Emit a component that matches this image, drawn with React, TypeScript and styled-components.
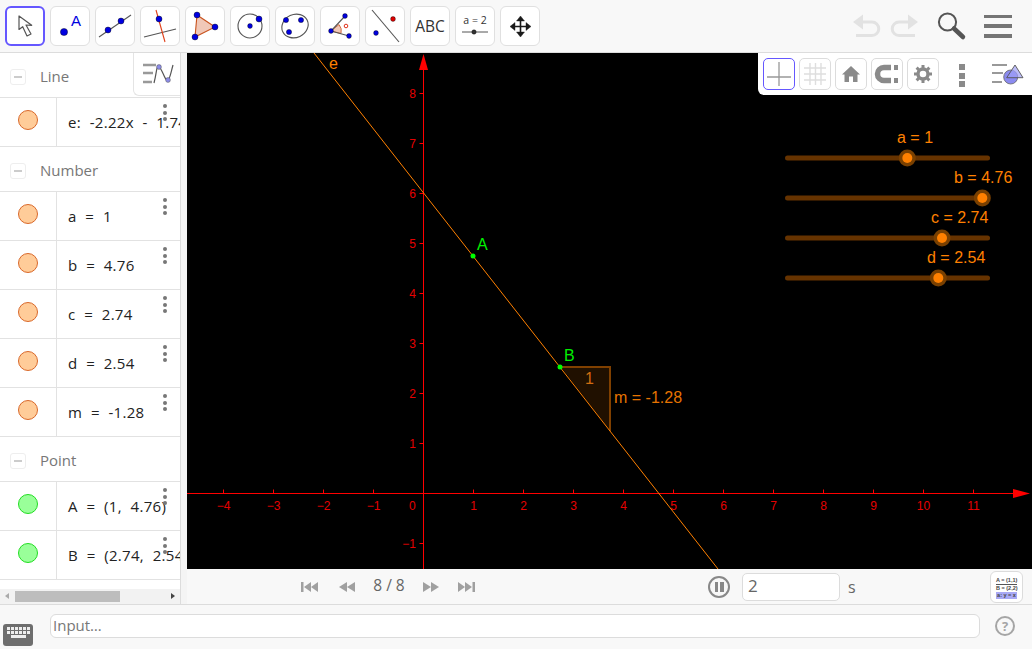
import React from 'react'
import styled, { createGlobalStyle } from 'styled-components'

const GlobalStyle = createGlobalStyle`
  html, body {
    margin: 0;
    padding: 0;
    background: #fff;
    font-family: "Open Sans", "Liberation Sans", sans-serif;
    overflow: hidden;
  }
  * { box-sizing: border-box; }
`

const Page = styled.div`
  width: 1032px;
  height: 649px;
  display: flex;
  flex-direction: column;
  background: #f8f8f8;
`

/* top toolbar */
const Toolbar = styled.div`
  height: 53px;
  flex: none;
  display: flex;
  align-items: flex-start;
  padding: 6px 20px 0 5px;
  gap: 5px;
  background: #f8f8f8;
  border-bottom: 1px solid #dcdcdc;
`

const ToolButton = styled.div<{ $active?: boolean }>`
  width: 40px;
  height: 40px;
  flex: none;
  background: #fff;
  border-radius: 6px;
  border: ${({ $active }) => ($active ? '2px solid #6557ff' : '1px solid #e0e0e0')};
  display: flex;
  align-items: center;
  justify-content: center;
  svg { display: block; flex: none; }
`

const ToolbarRight = styled.div`
  margin-left: auto;
  display: flex;
  align-items: center;
  height: 40px;
  gap: 9px;
`

const dot = (x: number, y: number, r = 3, fill = '#0000e0') => (
  <circle cx={x} cy={y} r={r} fill={fill} stroke="#000" strokeWidth={0.4} />
)

const Tool: React.FC<{ active?: boolean; children: React.ReactNode }> = ({ active, children }) => (
  <ToolButton $active={active}>
    <svg width="40" height="40" viewBox="0 0 40 40">
      {children}
    </svg>
  </ToolButton>
)

const toolIcons: React.ReactNode[] = [
  <path key="a" d="M14 10 L14 23.5 L17.7 20.7 L22 30 L26 28 L21 19 L26.7 19.3 Z" fill="#fff" stroke="#555" strokeWidth="1.2" strokeLinejoin="round" />,
  <g key="b">
    {dot(14, 26, 3.6)}
    <text x="26" y="20" fontSize="15" fill="#0000e0" textAnchor="middle" fontFamily="'Liberation Sans', sans-serif">A</text>
  </g>,
  <g key="c">
    <line x1="4" y1="31" x2="36" y2="9" stroke="#555" strokeWidth="1.1" />
    {dot(13, 24)}
    {dot(26, 15)}
  </g>,
  <g key="d">
    <line x1="4" y1="31" x2="36" y2="23" stroke="#555" strokeWidth="1.1" />
    <line x1="16" y1="4" x2="25" y2="36" stroke="#e0401a" strokeWidth="1.1" />
    {dot(19, 13)}
  </g>,
  <g key="e">
    <polygon points="12,9 30,21 10,31" fill="#f0c8b8" stroke="#c8521d" strokeWidth="1.1" />
    {dot(12, 9)}
    {dot(30, 21)}
    {dot(10, 31)}
  </g>,
  <g key="f">
    <circle cx="20" cy="20" r="12" fill="none" stroke="#555" strokeWidth="1.1" />
    {dot(20, 20, 2.4)}
    {dot(29, 13)}
  </g>,
  <g key="g">
    <ellipse cx="20" cy="20" rx="13.5" ry="11.5" fill="none" stroke="#555" strokeWidth="1.1" transform="rotate(-25 20 20)" />
    {dot(11, 14, 2.6)}
    {dot(26, 14, 2.6)}
    {dot(14, 26, 2.6)}
  </g>,
  <g key="h">
    <path d="M11 25 L19 18.5 A10 10 0 0 1 21 27.5 Z" fill="#f0c8b8" stroke="#c8521d" strokeWidth="0.8" />
    <path d="M25 10 L11 25 L29 30" fill="none" stroke="#555" strokeWidth="1.1" />
    <circle cx="26" cy="20" r="1.8" fill="none" stroke="#e0301a" strokeWidth="1" />
    {dot(25, 10, 2.4)}
    {dot(11, 25, 2.4)}
    {dot(29, 30, 2.4)}
  </g>,
  <g key="i">
    <line x1="7" y1="4" x2="34" y2="36" stroke="#555" strokeWidth="1.1" />
    {dot(28, 13, 2.4, '#e00000')}
    {dot(11, 27, 2.4)}
  </g>,
  <text key="j" x="20" y="26" fontSize="15.5" fill="#333" textAnchor="middle" fontFamily="'Open Sans', sans-serif">ABC</text>,
  <g key="k">
    <text x="20" y="18" fontSize="10.5" fill="#333" textAnchor="middle" fontFamily="'Open Sans', sans-serif">a = 2</text>
    <line x1="7" y1="26" x2="33" y2="26" stroke="#555" strokeWidth="1" />
    {dot(19, 26, 2.2, '#333')}
  </g>,
  <g key="l" fill="#1a1a1a" stroke="#1a1a1a">
    <path d="M20.5 13 V28 M13 20.5 H28" strokeWidth="1.6" fill="none" />
    <polygon points="20.5,10 16.5,15 24.5,15" strokeWidth="0.4" />
    <polygon points="20.5,31 16.5,26 24.5,26" strokeWidth="0.4" />
    <polygon points="10,20.5 15,16.5 15,24.5" strokeWidth="0.4" />
    <polygon points="31,20.5 26,16.5 26,24.5" strokeWidth="0.4" />
  </g>,
]

const UndoIcon: React.FC<{ flip?: boolean }> = ({ flip }) => (
  <svg width="28" height="24" viewBox="0 0 28 24" style={flip ? { transform: 'scaleX(-1)' } : undefined}>
    <path d="M5 8 H19 A6.5 6.5 0 0 1 19 21.5 H3" fill="none" stroke="#e2e2e2" strokeWidth="3" />
    <polygon points="0,8 10,0.5 10,15.5" fill="#e2e2e2" />
  </svg>
)

const SearchIcon = () => (
  <svg width="30" height="30" viewBox="0 0 30 30" style={{ margin: '0 8px 0 10px' }}>
    <circle cx="10.5" cy="11" r="8.6" fill="none" stroke="#555" strokeWidth="2" />
    <line x1="17" y1="17.5" x2="26" y2="26" stroke="#555" strokeWidth="4.5" strokeLinecap="round" />
  </svg>
)

const MenuIcon = styled.div`
  width: 28px;
  height: 23px;
  display: flex;
  flex-direction: column;
  justify-content: space-between;
  span {
    display: block;
    height: 3.5px;
    background: #757575;
  }
`

/* workspace */
const Workspace = styled.div`
  flex: 1;
  min-height: 0;
  display: flex;
`

const AlgebraPanel = styled.div`
  position: relative;
  width: 181px;
  flex: none;
  display: flex;
  flex-direction: column;
  background: #fff;
  border-right: 1px solid #dcdcdc;
  border-bottom: 1px solid #dcdcdc;
`

const AlgebraList = styled.div`
  flex: 1;
  min-height: 0;
  overflow: hidden;
`

const GroupHeader = styled.div`
  height: 45px;
  display: flex;
  align-items: center;
  padding: 1px 0 0 10px;
  gap: 14px;
  color: #777;
  font-size: 15px;
  border-bottom: 1px solid #e2e2e2;
`

const Collapse = styled.span`
  width: 16px;
  height: 16px;
  margin-top: 2px;
  border: 1px solid #eee;
  border-radius: 3px;
  display: flex;
  align-items: center;
  justify-content: center;
  &::before {
    content: '';
    width: 8px;
    height: 2px;
    background: #ccc;
  }
`

const Row = styled.div`
  position: relative;
  height: 49px;
  display: flex;
  border-bottom: 1px solid #e2e2e2;
`

const MarbleCell = styled.div`
  width: 57px;
  flex: none;
  padding: 12px 0 0 18px;
  border-right: 1px solid #e2e2e2;
`

const Marble = styled.div<{ $color: string; $edge: string }>`
  width: 20px;
  height: 20px;
  border-radius: 50%;
  background: ${({ $color }) => $color};
  border: 1px solid ${({ $edge }) => $edge};
`

const Formula = styled.div`
  padding: 14px 0 0 11px;
  font-size: 15px;
  line-height: 20px;
  letter-spacing: 0.3px;
  word-spacing: 4.5px;
  color: #222;
  white-space: nowrap;
  overflow: hidden;
`

const MoreDots = styled.div`
  position: absolute;
  left: 163px;
  top: 6px;
  display: flex;
  flex-direction: column;
  gap: 2.5px;
  span {
    width: 4px;
    height: 4px;
    border-radius: 50%;
    background: #777;
  }
`

const ViewToggle = styled.div`
  position: absolute;
  top: 0;
  right: 0;
  width: 47px;
  height: 43px;
  background: #fff;
  border-left: 1px solid #e4e4e4;
  border-bottom: 1px solid #e4e4e4;
  border-bottom-left-radius: 6px;
`

const ScrollBar = styled.div`
  height: 15px;
  flex: none;
  display: flex;
  align-items: center;
  background: #f2f2f2;
  position: relative;
`

const ScrollThumb = styled.div`
  width: 105px;
  height: 11px;
  margin-left: 15px;
  background: #bdbdbd;
`

const ScrollArrow = styled.span<{ $right?: boolean }>`
  position: absolute;
  top: 4px;
  ${({ $right }) => ($right ? 'right: 5px;' : 'left: 5px;')}
  width: 0;
  height: 0;
  border-top: 3.5px solid transparent;
  border-bottom: 3.5px solid transparent;
  ${({ $right }) => ($right ? 'border-left: 4px solid #444;' : 'border-right: 4px solid #aaa;')}
`

const Gutter = styled.div`
  width: 6px;
  flex: none;
  background: #f4f4f4;
  border-bottom: 1px solid #dcdcdc;
`

const RightColumn = styled.div`
  flex: 1;
  min-width: 0;
  display: flex;
  flex-direction: column;
`

const Graphics = styled.div`
  position: relative;
  flex: 1;
  min-height: 0;
  background: #000;
  svg { display: block; }
`

const StyleBar = styled.div`
  position: absolute;
  top: 0;
  right: 0;
  width: 274px;
  height: 42px;
  padding: 5px 0 0 5px;
  display: flex;
  align-items: flex-start;
  gap: 4px;
  background: #fff;
  border-bottom-left-radius: 6px;
`

const StyleButton = styled.div<{ $active?: boolean }>`
  width: 32px;
  height: 32px;
  flex: none;
  background: #fff;
  border: 1px solid ${({ $active }) => ($active ? '#6557ff' : '#dcdcdc')};
  border-radius: 5px;
  display: flex;
  align-items: center;
  justify-content: center;
`

const StyleDots = styled.div`
  width: 6px;
  margin: 6px 23px 0 16px;
  display: flex;
  flex-direction: column;
  gap: 2.5px;
  flex: none;
  span {
    display: block;
    width: 6px;
    height: 6px;
    background: #8a8a8a;
  }
`

/* animation bar */
const PlayBar = styled.div`
  height: 36px;
  flex: none;
  display: flex;
  align-items: center;
  padding-left: 114px;
  background: #f8f8f8;
  border-bottom: 1px solid #dcdcdc;
`

const NavGroup = styled.div`
  display: flex;
  align-items: center;
  svg { display: block; }
`

const PageLabel = styled.span`
  width: 64px;
  text-align: center;
  margin: 0 2px 3px 2px;
  font-size: 15.5px;
  color: #666;
`

const PauseButton = styled.div`
  width: 22px;
  height: 22px;
  margin-left: 233px;
  border: 2px solid #888;
  border-radius: 50%;
  display: flex;
  align-items: center;
  justify-content: center;
  gap: 2px;
  flex: none;
  span {
    width: 3.5px;
    height: 10px;
    background: #888;
  }
`

const TimeField = styled.div`
  width: 98px;
  height: 28px;
  margin-left: 12px;
  padding-left: 5px;
  background: #fff;
  border: 1px solid #dcdcdc;
  border-radius: 5px;
  font-size: 17px;
  line-height: 24px;
  color: #666;
  flex: none;
`

const Unit = styled.span`
  margin-left: 8px;
  font-size: 16px;
  color: #666;
`

const TableButton = styled.div`
  margin-left: auto;
  margin-right: 9px;
  width: 33px;
  height: 32px;
  padding-top: 5px;
  background: #fff;
  border: 1px solid #dcdcdc;
  border-radius: 6px;
  display: flex;
  flex-direction: column;
  align-items: center;
  font-family: "Liberation Sans", sans-serif;
  font-size: 5.5px;
  font-weight: bold;
  line-height: 7px;
  color: #444;
  span { width: 21px; text-align: center; white-space: nowrap; }
  span + span { border-top: 1px solid #555; }
  span:last-child { background: #a9a9f5; border-top: none; }
`

/* input bar */
const InputBar = styled.div`
  height: 44px;
  flex: none;
  display: flex;
  align-items: flex-start;
  padding: 9px 0 0 3px;
  background: #f8f8f8;
`

const Keyboard = styled.div`
  width: 30px;
  height: 22px;
  margin-top: 10px;
  padding: 3px 3px 2px;
  flex: none;
  border-radius: 3px;
  background: #6e6e6e;
  display: grid;
  grid-template-columns: repeat(6, 3px);
  grid-auto-rows: 3px;
  justify-content: center;
  gap: 1px;
  i { background: #eee; display: block; }
  i:last-child { grid-column: 2 / 6; }
`

const InputField = styled.div`
  width: 930px;
  height: 24px;
  margin-left: 17px;
  padding-left: 2px;
  flex: none;
  background: #fff;
  border: 1px solid #dcdcdc;
  border-radius: 6px;
  font-size: 15px;
  line-height: 21px;
  color: #777;
`

const HelpIcon = styled.div`
  width: 20px;
  height: 20px;
  margin: 2px 0 0 15px;
  flex: none;
  border: 2px solid #a5a5a5;
  border-radius: 50%;
  font-size: 13px;
  font-weight: bold;
  line-height: 16px;
  text-align: center;
  color: #a5a5a5;
`

const orange = { color: '#ffcc99', edge: '#d9682a' }
const green = { color: '#99ff99', edge: '#22dd22' }

const groups = [
  { name: 'Line', rows: [{ text: 'e: -2.22x - 1.74', ...orange }] },
  {
    name: 'Number',
    rows: [
      { text: 'a = 1', ...orange },
      { text: 'b = 4.76', ...orange },
      { text: 'c = 2.74', ...orange },
      { text: 'd = 2.54', ...orange },
      { text: 'm = -1.28', ...orange },
    ],
  },
  {
    name: 'Point',
    rows: [
      { text: 'A = (1, 4.76)', ...green },
      { text: 'B = (2.74, 2.54)', ...green },
    ],
  },
]

const sliders = [
  { label: 'a = 1', knob: 907.3, textX: 897, y: 158 },
  { label: 'b = 4.76', knob: 982.3, textX: 954, y: 198 },
  { label: 'c = 2.74', knob: 942, textX: 931, y: 238 },
  { label: 'd = 2.54', knob: 938.3, textX: 927, y: 278 },
]

const unitX = 50
const originX = 423.5
const originY = 493.5
const axisRed = '#ff0000'
const tickRed = '#e60000'
const lineOrange = '#ff8000'
const sansFont = "'Liberation Sans', sans-serif"

const GraphCanvas = () => {
  const xs = [-4, -3, -2, -1, 1, 2, 3, 4, 5, 6, 7, 8, 9, 10, 11]
  const ys = [-1, 1, 2, 3, 4, 5, 6, 7, 8]
  return (
    <svg width="845" height="516" viewBox="187 53 845 516" fontFamily={sansFont}>
      {/* axes */}
      <line x1={originX} y1="60" x2={originX} y2="569" stroke={axisRed} strokeWidth="1" />
      <line x1="187" y1={originY} x2="1020" y2={originY} stroke={axisRed} strokeWidth="1" />
      <polygon points="423.5,54 419,70 428,70" fill={axisRed} />
      <polygon points="1030,493.5 1013,489 1013,498" fill={axisRed} />
      {xs.map((v) => (
        <g key={v}>
          <line x1={originX + v * unitX} y1={originY - 4} x2={originX + v * unitX} y2={originY} stroke={axisRed} />
          <text x={originX + v * unitX} y="510" fontSize="12" fill={tickRed} textAnchor="middle">
            {v < 0 ? `\u2212${-v}` : v}
          </text>
        </g>
      ))}
      {ys.map((v) => (
        <g key={v}>
          <line x1={originX - 4} y1={originY - v * unitX} x2={originX} y2={originY - v * unitX} stroke={axisRed} />
          <text x="416" y={originY - v * unitX + 4} fontSize="12" fill={tickRed} textAnchor="end">
            {v < 0 ? `\u2212${-v}` : v}
          </text>
        </g>
      ))}
      <text x="409" y="510" fontSize="12" fill={tickRed}>0</text>

      {/* slope triangle */}
      <polygon points="561,367 610,367 610,431" fill="#201000" />
      <polyline points="561,367 610,367 610,431" fill="none" stroke="#804000" strokeWidth="2" />
      <text x="585" y="384" fontSize="16" fill="#d06c10">1</text>
      <text x="614" y="403" fontSize="16" fill={lineOrange} opacity="0.9">m = -1.28</text>

      {/* line e */}
      <line x1="314" y1="53" x2="718" y2="569" stroke={lineOrange} strokeWidth="1" />
      <text x="329" y="69" fontSize="16" fill={lineOrange}>e</text>

      {/* points */}
      <circle cx="473" cy="256" r="2.5" fill="#00ff00" />
      <text x="477" y="250" fontSize="16" fill="#00f000">A</text>
      <circle cx="560" cy="367" r="2.5" fill="#00ff00" />
      <text x="564" y="361" fontSize="16" fill="#00f000">B</text>

      {/* sliders */}
      {sliders.map((s) => (
        <g key={s.label}>
          <line x1="787.5" y1={s.y} x2="987.5" y2={s.y} stroke="#663300" strokeWidth="5" strokeLinecap="round" />
          <circle cx={s.knob} cy={s.y} r="8.5" fill="#7a4000" />
          <circle cx={s.knob} cy={s.y} r="5" fill={lineOrange} />
          <text x={s.textX} y={s.y - 15} fontSize="16" fill={lineOrange}>{s.label}</text>
        </g>
      ))}
    </svg>
  )
}

const NavIcon: React.FC<{ dir: 1 | -1; end?: boolean; gap: number }> = ({ dir, end, gap }) => (
  <svg
    width="17"
    height="12"
    viewBox="0 0 17 12"
    style={{ marginRight: gap, transform: dir < 0 ? 'scaleX(-1)' : undefined }}
  >
    <polygon points={end ? '0,1 7,6 0,11' : '0,1 8,6 0,11'} fill="#a0a0a0" />
    <polygon points={end ? '7,1 14,6 7,11' : '8,1 16,6 8,11'} fill="#a0a0a0" />
    {end && <rect x="14.5" y="1" width="2.5" height="10" fill="#a0a0a0" />}
  </svg>
)

export default function App() {
  return (
    <Page>
      <GlobalStyle />
      <Toolbar>
        {toolIcons.map((icon, i) => (
          <Tool key={i} active={i === 0}>
            {icon}
          </Tool>
        ))}
        <ToolbarRight>
          <UndoIcon />
          <UndoIcon flip />
          <SearchIcon />
          <MenuIcon>
            <span />
            <span />
            <span />
          </MenuIcon>
        </ToolbarRight>
      </Toolbar>

      <Workspace>
        <AlgebraPanel>
          <AlgebraList>
            {groups.map((g) => (
              <React.Fragment key={g.name}>
                <GroupHeader>
                  <Collapse />
                  {g.name}
                </GroupHeader>
                {g.rows.map((r) => (
                  <Row key={r.text}>
                    <MarbleCell>
                      <Marble $color={r.color} $edge={r.edge} />
                    </MarbleCell>
                    <Formula>{r.text}</Formula>
                    <MoreDots>
                      <span />
                      <span />
                      <span />
                    </MoreDots>
                  </Row>
                ))}
              </React.Fragment>
            ))}
          </AlgebraList>
          <ViewToggle>
            <svg width="46" height="42" viewBox="133 53 46 42">
              <path d="M142 65 H155 M142 73 H152 M142 82 H151" stroke="#999" strokeWidth="2.4" />
              <path d="M153 83 C156 72 155 66 158 67 C161 68 164 82 167 80 C169 79 170 72 172 65" fill="none" stroke="#555" strokeWidth="1.2" />
              <circle cx="158" cy="67" r="2.4" fill="#8b8be8" stroke="#555" strokeWidth="0.5" />
              <circle cx="167" cy="80" r="2.4" fill="#8b8be8" stroke="#555" strokeWidth="0.5" />
            </svg>
          </ViewToggle>
          <ScrollBar>
            <ScrollArrow />
            <ScrollThumb />
            <ScrollArrow $right />
          </ScrollBar>
        </AlgebraPanel>
        <Gutter />
        <RightColumn>
          <Graphics>
            <GraphCanvas />
            <StyleBar>
              <StyleButton $active>
                <svg width="26" height="26" viewBox="0 0 26 26">
                  <path d="M13 1 V25 M1 16 H25" stroke="#999" strokeWidth="1.3" />
                </svg>
              </StyleButton>
              <StyleButton>
                <svg width="26" height="26" viewBox="0 0 26 26">
                  <path d="M8 2 V24 M13.5 2 V24 M19 2 V24 M2 7 H24 M2 13 H24 M2 19 H24" stroke="#dedede" strokeWidth="1.4" />
                </svg>
              </StyleButton>
              <StyleButton>
                <svg width="20" height="20" viewBox="0 0 20 20">
                  <path d="M10 2 L19 10.5 H16.5 V18 H12 V12.5 H8 V18 H3.5 V10.5 H1 Z" fill="#8a8a8a" />
                </svg>
              </StyleButton>
              <StyleButton>
                <svg width="26" height="22" viewBox="0 0 26 22">
                  <path d="M17 4.5 H10 A6.5 6.5 0 0 0 10 17.5 H17" fill="none" stroke="#8a8a8a" strokeWidth="5.5" />
                  <rect x="20" y="2" width="4" height="5" fill="#8a8a8a" />
                  <rect x="20" y="15" width="4" height="5" fill="#8a8a8a" />
                </svg>
              </StyleButton>
              <StyleButton>
                <svg width="20" height="20" viewBox="0 0 20 20">
                  <circle cx="10" cy="10" r="5" fill="none" stroke="#8a8a8a" strokeWidth="3.4" />
                  <path
                    d="M10 1 V4 M10 16 V19 M1 10 H4 M16 10 H19 M3.6 3.6 L5.8 5.8 M14.2 14.2 L16.4 16.4 M3.6 16.4 L5.8 14.2 M14.2 5.8 L16.4 3.6"
                    stroke="#8a8a8a"
                    strokeWidth="3"
                  />
                </svg>
              </StyleButton>
              <StyleDots>
                <span />
                <span />
                <span />
              </StyleDots>
              <svg width="33" height="22" viewBox="0 0 33 22" style={{ marginTop: 6, flex: 'none' }}>
                <path d="M0 1 H15 M0 9 H11 M0 18 H10" stroke="#999" strokeWidth="1.8" />
                <circle cx="18.7" cy="13" r="7" fill="#8b8bf0" stroke="#666" strokeWidth="0.8" />
                <polygon points="23,1 31,13.7 14.7,13.7" fill="#a0a0f5" fillOpacity="0.7" stroke="#555" strokeWidth="0.9" />
              </svg>
            </StyleBar>
          </Graphics>
          <PlayBar>
            <NavGroup>
              <NavIcon dir={-1} end gap={20} />
              <NavIcon dir={-1} gap={0} />
              <PageLabel>8 / 8</PageLabel>
              <NavIcon dir={1} gap={18} />
              <NavIcon dir={1} end gap={0} />
            </NavGroup>
            <PauseButton>
              <span />
              <span />
            </PauseButton>
            <TimeField>2</TimeField>
            <Unit>s</Unit>
            <TableButton>
              <span>A = (1,1)</span>
              <span>B = (2,2)</span>
              <span>a: y = x</span>
            </TableButton>
          </PlayBar>
        </RightColumn>
      </Workspace>

      <InputBar>
        <Keyboard>
          {Array.from({ length: 13 }, (_, i) => (
            <i key={i} />
          ))}
        </Keyboard>
        <InputField>Input…</InputField>
        <HelpIcon>?</HelpIcon>
      </InputBar>
    </Page>
  )
}
